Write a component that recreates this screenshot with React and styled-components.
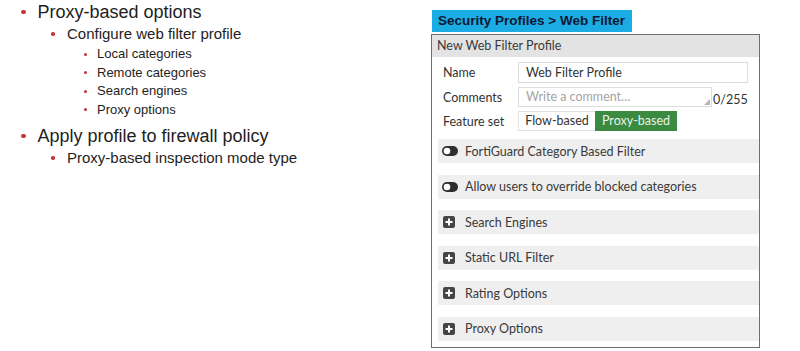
import styled, { createGlobalStyle } from "styled-components";

const GlobalStyle = createGlobalStyle`
  html, body {
    margin: 0;
    padding: 0;
    background: #ffffff;
  }
  body {
    width: 800px;
    height: 351px;
    overflow: hidden;
  }
`;

const Page = styled.div`
  display: flex;
  width: 800px;
  height: 351px;
`;

/* ---------- left: slide bullets ---------- */

const Bullets = styled.ul`
  width: 431px;
  margin: 0;
  padding: 1px 0 0 0;
  list-style: none;
  font-family: "Liberation Sans", Arial, sans-serif;
  color: #1e1e1e;
`;

const levels = {
  1: { size: 18, line: 22, indent: 21, dot: 4.5, gap: 12, top: 0 },
  2: { size: 15, line: 18, indent: 51, dot: 3.5, gap: 12.5, top: 2 },
  3: { size: 13, line: 18.5, indent: 84, dot: 3, gap: 10, top: 0 },
};

const Item = styled.li`
  display: flex;
  align-items: center;
  padding-left: ${(p) => levels[p.level].indent}px;
  font-size: ${(p) => levels[p.level].size}px;
  line-height: ${(p) => levels[p.level].line}px;
  margin-top: ${(p) => p.mt ?? levels[p.level].top}px;
  white-space: nowrap;
`;

const Dot = styled.span`
  width: ${(p) => levels[p.level].dot}px;
  height: ${(p) => levels[p.level].dot}px;
  border-radius: 50%;
  background: #c8323a;
  margin-right: ${(p) => levels[p.level].gap}px;
  flex: none;
`;

const Bullet = ({ level, mt, children }) => (
  <Item level={level} mt={mt}>
    <Dot level={level} />
    {children}
  </Item>
);

/* ---------- right: FortiGate screenshot ---------- */

const Shot = styled.div`
  width: 329px;
  display: flex;
  flex-direction: column;
  font-family: Lato, "Open Sans", sans-serif;
  color: #333;
`;

const Crumb = styled.div`
  margin: 10px 0 0 1px;
  width: 200px;
  height: 22px;
  background: #1cace4;
  color: #0c1833;
  font-family: "Liberation Sans", Arial, sans-serif;
  font-weight: bold;
  font-size: 13.5px;
  line-height: 22px;
  padding-left: 6px;
  box-sizing: border-box;
  white-space: nowrap;
`;

const Panel = styled.div`
  margin-top: 2px;
  height: 314px;
  border: 1px solid #6e6e6e;
  box-sizing: border-box;
  display: flex;
  flex-direction: column;
`;

const PanelHead = styled.div`
  height: 22px;
  background: #e3e3e3;
  font-size: 12.5px;
  line-height: 22px;
  padding-left: 5px;
  color: #3a3a3a;
`;

const Form = styled.div`
  display: flex;
  flex-direction: column;
  gap: 4px;
  padding: 5px 0 0 11px;
`;

const FieldRow = styled.div`
  display: flex;
  align-items: ${(p) => p.align || "center"};
`;

const Label = styled.div`
  width: 75px;
  font-size: 12.5px;
  color: #333;
  align-self: center;
`;

const TextBox = styled.div`
  position: relative;
  width: ${(p) => p.w}px;
  height: ${(p) => p.h}px;
  border: 1px solid #dcdcdc;
  box-sizing: border-box;
  font-size: 12.5px;
  line-height: ${(p) => p.h - 2}px;
  padding-left: 7px;
  color: ${(p) => (p.placeholder ? "#a4a4a4" : "#333")};
`;

const Grip = styled.span`
  position: absolute;
  right: 1px;
  bottom: 1px;
  width: 0;
  height: 0;
  border-left: 6px solid transparent;
  border-bottom: 6px solid #b5b5b5;
`;

const Counter = styled.span`
  font-size: 12.5px;
  margin-left: 1px;
  line-height: 14px;
  color: #333;
`;

const Toggle = styled.div`
  display: flex;
  height: 20px;
`;

const Option = styled.div`
  width: ${(p) => p.w}px;
  box-sizing: border-box;
  font-size: 12.5px;
  text-align: center;
  background: ${(p) => (p.active ? "#3b8a42" : "#fff")};
  color: ${(p) => (p.active ? "#e8f3e8" : "#333")};
  border: ${(p) => (p.active ? "none" : "1px solid #e2e2e2")};
  border-right: none;
  line-height: ${(p) => (p.active ? 20 : 18)}px;
`;

const Sections = styled.div`
  display: flex;
  flex-direction: column;
  gap: 11.5px;
  padding: 8px 0 0 6px;
`;

const Section = styled.div`
  height: 24px;
  display: flex;
  align-items: center;
  background: #efefef;
  padding-left: 4px;
  font-size: 12.5px;
  color: #3a3a3a;
`;

const IconBox = styled.span`
  width: 23px;
  display: flex;
  align-items: center;
  flex: none;
`;

const SwitchIcon = () => (
  <svg width="16" height="10" viewBox="0 0 16 10">
    <rect x="0" y="0" width="16" height="10" rx="5" fill="#2e2e2e" />
    <circle cx="5" cy="5" r="3.3" fill="#fff" />
  </svg>
);

const PlusIcon = () => (
  <svg width="12" height="12" viewBox="0 0 12 12" style={{ marginLeft: 1 }}>
    <rect x="0" y="0" width="12" height="12" rx="2" fill="#454545" />
    <rect x="5" y="2.5" width="2" height="7" fill="#fff" />
    <rect x="2.5" y="5" width="7" height="2" fill="#fff" />
  </svg>
);

const sections = [
  { kind: "switch", label: "FortiGuard Category Based Filter" },
  { kind: "switch", label: "Allow users to override blocked categories" },
  { kind: "plus", label: "Search Engines" },
  { kind: "plus", label: "Static URL Filter" },
  { kind: "plus", label: "Rating Options" },
  { kind: "plus", label: "Proxy Options" },
];

export default function App() {
  return (
    <Page>
      <GlobalStyle />
      <Bullets>
        <Bullet level={1}>Proxy-based options</Bullet>
        <Bullet level={2}>Configure web filter profile</Bullet>
        <Bullet level={3} mt={2}>Local categories</Bullet>
        <Bullet level={3}>Remote categories</Bullet>
        <Bullet level={3}>Search engines</Bullet>
        <Bullet level={3}>Proxy options</Bullet>
        <Bullet level={1} mt={6}>Apply profile to firewall policy</Bullet>
        <Bullet level={2}>Proxy-based inspection mode type</Bullet>
      </Bullets>

      <Shot>
        <Crumb>Security Profiles &gt; Web Filter</Crumb>
        <Panel>
          <PanelHead>New Web Filter Profile</PanelHead>
          <Form>
            <FieldRow>
              <Label>Name</Label>
              <TextBox w={230} h={21}>Web Filter Profile</TextBox>
            </FieldRow>
            <FieldRow align="flex-end">
              <Label>Comments</Label>
              <TextBox w={194} h={20} placeholder>
                Write a comment…
                <Grip />
              </TextBox>
              <Counter>0/255</Counter>
            </FieldRow>
            <FieldRow>
              <Label>Feature set</Label>
              <Toggle>
                <Option w={77}>Flow-based</Option>
                <Option w={82} active>Proxy-based</Option>
              </Toggle>
            </FieldRow>
          </Form>
          <Sections>
            {sections.map((s) => (
              <Section key={s.label}>
                <IconBox>{s.kind === "switch" ? <SwitchIcon /> : <PlusIcon />}</IconBox>
                {s.label}
              </Section>
            ))}
          </Sections>
        </Panel>
      </Shot>
    </Page>
  );
}
